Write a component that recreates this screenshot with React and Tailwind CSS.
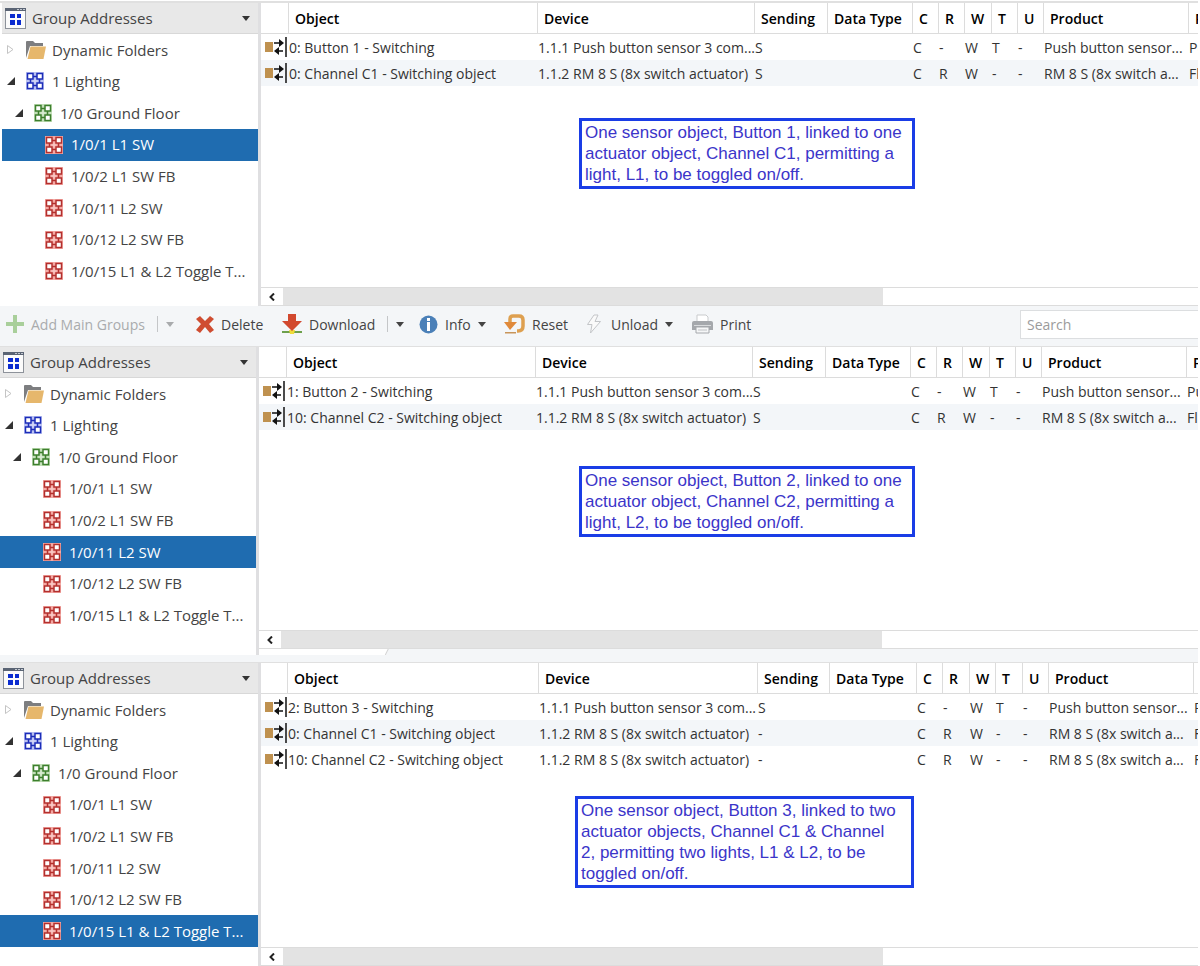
import clsx from 'clsx';

const flags = ['C', 'R', 'W', 'T', 'U'];

const groups = [
  { id: '1/0/1', name: '1/0/1 L1 SW' },
  { id: '1/0/2', name: '1/0/2 L1 SW FB' },
  { id: '1/0/11', name: '1/0/11 L2 SW' },
  { id: '1/0/12', name: '1/0/12 L2 SW FB' },
  { id: '1/0/15', name: '1/0/15 L1 & L2 Toggle T...' },
];

const sensor = {
  device: '1.1.1 Push button sensor 3 com...',
  flags: ['C', '-', 'W', 'T', '-'],
  product: 'Push button sensor...',
  program: 'Pu',
};

const actuator = {
  device: '1.1.2 RM 8 S (8x switch actuator)',
  flags: ['C', 'R', 'W', '-', '-'],
  product: 'RM 8 S (8x switch a...',
  program: 'Fl',
};

const colsNarrow = ['w-7', 'w-[249px]', 'w-[217px]', 'w-[73px]', 'w-[85px]', 'w-[26px]', 'w-[26px]', 'w-[27px]', 'w-[26px]', 'w-[26px]', 'w-[145px]', 'w-40'];
const colsWide = ['w-[27px]', 'w-[251px]', 'w-[219px]', 'w-[72px]', 'w-[87px]', 'w-[26px]', 'w-[27px]', 'w-[26px]', 'w-[27px]', 'w-[26px]', 'w-[145px]', 'w-40'];

function Caret({ className }) {
  return (
    <svg viewBox="0 0 8 5" className={clsx('w-2 h-[5px] shrink-0', className)}>
      <path d="M0 0h8L4 5z" fill="currentColor" />
    </svg>
  );
}

function WindowIcon() {
  return (
    <svg viewBox="0 0 21 21" className="w-[21px] h-[21px] shrink-0">
      <rect x="0.5" y="0.5" width="20" height="20" fill="#fbfbfb" stroke="#8d929a" />
      <rect x="0" y="0" width="21" height="3" fill="#5a6474" />
      <path d="M12 1h2v1h-2zM15 1h2v1h-2zM18 1h2v1h-2z" fill="#c3c9d2" />
      <path d="M5 6h5v4H5zM12 6h4v4h-4zM5 12h5v5H5zM12 12h4v5h-4z" fill="#0a2bd0" />
    </svg>
  );
}

function FolderIcon() {
  return (
    <svg viewBox="0 0 20 18" className="w-5 h-[18px] shrink-0">
      <path d="M0 17V1q0-1 1-1h6l2 2h8v3H4z" fill="#7d7e80" />
      <path d="M4.500 5.500H20L17.500 18H1.500z" fill="#e6b76c" />
    </svg>
  );
}

// four linked squares, coloured by level
function GroupIcon({ stroke, fill }) {
  return (
    <svg viewBox="0 0 18 18" className="w-[18px] h-[18px] shrink-0">
      <rect width="18" height="18" fill={fill} />
      <path d="M7 4.500h4M7 13.500h4M4.500 7v4M13.500 7v4" stroke={stroke} strokeWidth="1.500" />
      <path d="M9 6.500v5M6.500 9h5" stroke="#fff" strokeOpacity="0.4" strokeWidth="1" />
      <g fill="#fff" stroke={stroke} strokeWidth="1.500">
        <rect x="1.500" y="1.500" width="5.500" height="5.500" />
        <rect x="11" y="1.500" width="5.500" height="5.500" />
        <rect x="1.500" y="11" width="5.500" height="5.500" />
        <rect x="11" y="11" width="5.500" height="5.500" />
      </g>
    </svg>
  );
}

function Expander({ open }) {
  return (
    <svg viewBox="0 0 16 12" className="w-4 h-3 mr-1 shrink-0">
      {open
        ? <path d="M9 2v8H1z" fill="#333" />
        : <path d="M1.500 1.500v8L7 5.500z" fill="none" stroke="#c4c4c4" />}
    </svg>
  );
}

function ObjectIcon() {
  return (
    <svg viewBox="0 0 26 26" className="block w-[26px] h-[26px]">
      <rect x="4" y="8" width="8" height="10" fill="#bf914f" />
      <path d="M13 9h7M22 17h-6" stroke="#111" strokeWidth="1.500" />
      <path d="M18 5l5 4-5 4zM18 13l-5 4 5 4z" fill="#111" />
      <path d="M25 3v20" stroke="#111" strokeWidth="1.500" />
    </svg>
  );
}

function Sidebar({ selected, className }) {
  return (
    <aside className={clsx('shrink-0 text-[15px] text-[#444]', className)}>
      <button className="flex items-center w-full h-[31px] pl-[3px] pr-2 gap-[6px] bg-[#e8e8e8] border-b border-[#d8d8d8] text-left">
        <WindowIcon />
        <span className="flex-1 font-medium">Group Addresses</span>
        <Caret className="text-[#333]" />
      </button>
      <ul className="flex flex-col h-[253px] whitespace-nowrap">
        <li className="flex flex-1 items-center pl-1">
          <Expander />
          <FolderIcon />
          <span className="pl-[6px]">Dynamic Folders</span>
        </li>
        <li className="flex flex-1 items-center pl-1">
          <Expander open />
          <GroupIcon stroke="#1c2db8" fill="#b9c0f2" />
          <span className="pl-2">1 Lighting</span>
        </li>
        <li className="flex flex-1 items-center pl-3">
          <Expander open />
          <GroupIcon stroke="#3d7f2d" fill="#c3dfb9" />
          <span className="pl-2">1/0 Ground Floor</span>
        </li>
        {groups.map(g => (
          <li key={g.id} className={clsx('flex flex-1 items-center pl-[43px]', g.id === selected && 'bg-[#1f6cb0] text-white')}>
            <GroupIcon stroke="#b3302e" fill="#f4a9a4" />
            <span className="pl-2">{g.name}</span>
          </li>
        ))}
      </ul>
    </aside>
  );
}

function ObjectTable({ rows, cols }) {
  const head = 'pl-[6px] font-semibold text-left border-r border-[#dcdcdc]';
  return (
    <table className="table-fixed w-full border-separate border-spacing-0 text-[14px] text-[#333] whitespace-nowrap">
      <colgroup>
        {cols.map((c, i) => <col key={i} className={c} />)}
      </colgroup>
      <thead>
        <tr className="h-[31px] text-black [&>th]:border-b">
          <th className={head} aria-label="Type"></th>
          <th className={head}>Object</th>
          <th className={head}>Device</th>
          <th className={head}>Sending</th>
          <th className={head}>Data Type</th>
          {flags.map(f => <th key={f} className={head}>{f}</th>)}
          <th className={head}>Product</th>
          <th className={head}>P</th>
        </tr>
      </thead>
      <tbody>
        {rows.map(row => (
          <tr key={row.object} className="h-[26px] even:bg-[#f3f6f9] [&>td]:p-0">
            <td><ObjectIcon /></td>
            <td>{row.object}</td>
            <td>{row.device}</td>
            <td>{row.sending}</td>
            <td></td>
            {row.flags.map((f, i) => <td key={i}>{f}</td>)}
            <td>{row.product}</td>
            <td>{row.program}</td>
          </tr>
        ))}
      </tbody>
    </table>
  );
}

function ScrollBar() {
  return (
    <div className="flex h-[19px] mt-auto shrink-0 border-y border-[#dcdcdc] bg-white">
      <button aria-label="Scroll left" className="flex items-center justify-center w-[22px] shrink-0">
        <svg viewBox="0 0 6 8" className="w-[6px] h-2">
          <path d="M5 0.500L1.500 4L5 7.500" fill="none" stroke="#222" strokeWidth="2" />
        </svg>
      </button>
      <div className="w-[64%] bg-[#e3e3e3]" />
    </div>
  );
}

function Panel({ selected, rows, cols, note, noteClass, className, sideClass, footer }) {
  return (
    <section className={clsx('flex border-[#e0e0e0]', className)}>
      <Sidebar selected={selected} className={sideClass} />
      <div className="w-[3px] shrink-0 bg-[#dfdfe1]" />
      <div className="flex flex-col flex-1 min-w-0 overflow-hidden">
        <ObjectTable rows={rows} cols={cols} />
        <p className={clsx("pl-[3px] py-px border-[3px] border-[#1a3de6] text-[#3b35c9] text-[17px] leading-[21px] font-['Liberation_Sans',sans-serif]", noteClass)}>
          {note}
        </p>
        <ScrollBar />
        {footer}
      </div>
    </section>
  );
}

function ToolButton({ icon, label, menu, split, className }) {
  return (
    <div className={clsx('flex items-center shrink-0', className)}>
      <button className="flex items-center gap-[7px]">
        {icon}
        <span>{label}</span>
        {menu && <Caret />}
      </button>
      {split && (
        <button aria-label={`${label} options`} className="flex items-center gap-2 ml-3">
          <span className="w-px h-4 bg-[#c4c6c8]" />
          <Caret />
        </button>
      )}
    </div>
  );
}

function Toolbar() {
  return (
    <div className="flex items-center h-10 pl-[6px] pb-1 bg-[#f4f6f8] text-[14px] text-[#444] whitespace-nowrap overflow-hidden">
      <ToolButton className="w-[190px] text-[#a9abad]" label="Add Main Groups" split icon={
        <svg viewBox="0 0 18 18" className="w-[18px] h-[18px]"><path d="M7 0h4v7h7v4h-7v7H7v-7H0V7h7z" fill="#a9cf9b" /></svg>
      } />
      <ToolButton className="w-[86px]" label="Delete" icon={
        <svg viewBox="0 0 18 18" className="w-[18px] h-[18px]"><path d="M4 1l5 5 5-5 4 3-5 5 5 6-4 3-5-6-5 6-4-3 5-6-5-5z" fill="#cf4d31" /></svg>
      } />
      <ToolButton className="w-[137px]" label="Download" split icon={
        <svg viewBox="0 0 20 20" className="w-5 h-5">
          <path d="M0 17h20v2H0z" fill="#6da04c" />
          <path d="M7 16h6l-1 4H8z" fill="#f0dc3c" />
          <path d="M6 0h8v7h6L10 17 0 7h6z" fill="#d2492f" />
        </svg>
      } />
      <ToolButton className="w-[85px]" label="Info" menu icon={
        <svg viewBox="0 0 19 19" className="w-[19px] h-[19px]">
          <circle cx="9.500" cy="9.500" r="9" fill="#4b80b8" />
          <path d="M8 3h3v3H8zM8 7h3v9H8z" fill="#fff" />
        </svg>
      } />
      <ToolButton className="w-[82px]" label="Reset" icon={
        <svg viewBox="0 0 21 20" className="w-[21px] h-5">
          <path d="M6 8V5q0-3 3-3h6q4 0 4 4v6q0 5-5 5h-1" fill="none" stroke="#dea050" strokeWidth="3.500" />
          <path d="M0 8h13l-7 8z" fill="#e0893a" />
          <path d="M1 18h11v1.500H1z" fill="#c8955a" />
        </svg>
      } />
      <ToolButton className="w-[106px]" label="Unload" menu icon={
        <svg viewBox="0 0 18 20" className="w-[18px] h-5">
          <path d="M8 1L1.500 10.500H6L4.500 19L14.500 7.500H9L12 1z" fill="#fafafa" stroke="#c3c5c8" />
        </svg>
      } />
      <ToolButton label="Print" icon={
        <svg viewBox="0 0 21 20" className="w-[21px] h-5">
          <path d="M5 8V1h9l2 2v5" fill="#fff" stroke="#c9cbcd" />
          <path d="M2 7h17q2 0 2 2v7H0V9q0-2 2-2z" fill="#a5a8ac" />
          <path d="M2 11h17v1H2z" fill="#d9dbdd" />
          <path d="M4 13h13v6H4z" fill="#f5f6f7" stroke="#a5a8ac" />
          <path d="M6 16h9" stroke="#c0c2c5" />
        </svg>
      } />
      <input type="text" placeholder="Search" aria-label="Search"
        className="w-[178px] h-[29px] shrink-0 ml-auto px-[6px] bg-white border border-r-0 border-[#dcdee0] placeholder:text-[#9b9b9b] outline-none" />
    </div>
  );
}

export default function App() {
  return (
    <main className="pt-px pr-0.5 bg-white overflow-hidden font-['Open_Sans','Noto_Sans',sans-serif]">
      <Panel
        selected="1/0/1"
        cols={colsNarrow}
        className="border-t-2 pl-0.5 h-[305px]"
        sideClass="w-64"
        rows={[
          { ...sensor, object: '0: Button 1 - Switching', sending: 'S' },
          { ...actuator, object: '0: Channel C1 - Switching object', sending: 'S' },
        ]}
        note="One sensor object, Button 1, linked to one actuator object, Channel C1, permitting a light, L1, to be toggled on/off."
        noteClass="w-[336px] mt-8 ml-[318px]"
      />
      <Toolbar />
      <Panel
        selected="1/0/11"
        cols={colsNarrow}
        className="border-t h-[309px]"
        sideClass="w-64"
        rows={[
          { ...sensor, object: '1: Button 2 - Switching', sending: 'S' },
          { ...actuator, object: '10: Channel C2 - Switching object', sending: 'S' },
        ]}
        note="One sensor object, Button 2, linked to one actuator object, Channel C2, permitting a light, L2, to be toggled on/off."
        noteClass="w-[336px] mt-9 ml-80"
        footer={
          <svg viewBox="0 0 937 6" preserveAspectRatio="xMinYMin slice" className="w-full h-[6px] shrink-0 bg-white">
            <path d="M129 0H2000V6H126z" fill="#f4f6f8" />
            <path d="M129 0L126 6" stroke="#d4d4d4" />
          </svg>
        }
      />
      <div className="h-[7px] bg-[#f4f6f8]" />
      <Panel
        selected="1/0/15"
        cols={colsWide}
        className="border-t h-[304px]"
        sideClass="w-[258px]"
        rows={[
          { ...sensor, object: '2: Button 3 - Switching', sending: 'S' },
          { ...actuator, object: '0: Channel C1 - Switching object', sending: '-' },
          { ...actuator, object: '10: Channel C2 - Switching object', sending: '-' },
        ]}
        note="One sensor object, Button 3, linked to two actuator objects, Channel C1 & Channel 2, permitting two lights, L1 & L2, to be toggled on/off."
        noteClass="w-[339px] pr-3 mt-6 ml-[314px]"
      />
    </main>
  );
}
